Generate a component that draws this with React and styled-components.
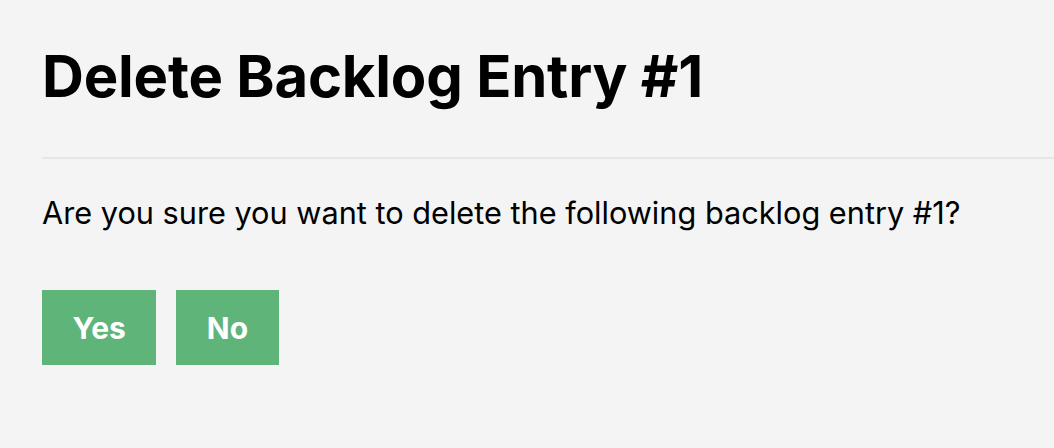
import React from "react";
import styled, { createGlobalStyle } from "styled-components";

const Global = createGlobalStyle`
  html, body { margin: 0; padding: 0; background: #f4f4f4; }
  body { font-family: Inter, "Noto Sans", sans-serif; color: #000; }
`;

const Page = styled.main`
  padding: 36px 0 0 42px;
`;

const Title = styled.h1`
  margin: 0;
  font-size: 58px;
  font-weight: 700;
  line-height: 80px;
  letter-spacing: -0.2px;
`;

const Rule = styled.hr`
  border: 0;
  height: 2px;
  background: #e6e6e6;
  margin: 41px 0 0 0;
`;

const Message = styled.p`
  margin: 34px 0 0 0;
  font-size: 30.7px;
  line-height: 40px;
`;

const Actions = styled.div`
  display: flex;
  gap: 20px;
  margin-top: 57px;
`;

const Button = styled.button`
  border: 0;
  background: #5fb47a;
  color: #fff;
  font-family: inherit;
  font-weight: 700;
  font-size: 30px;
  height: 75px;
  padding: 0 30.5px;
  cursor: pointer;
`;

export default function App() {
  return (
    <>
      <Global />
      <Page>
        <Title>Delete Backlog Entry #1</Title>
        <Rule />
        <Message>Are you sure you want to delete the following backlog entry #1?</Message>
        <Actions>
          <Button>Yes</Button>
          <Button>No</Button>
        </Actions>
      </Page>
    </>
  );
}
